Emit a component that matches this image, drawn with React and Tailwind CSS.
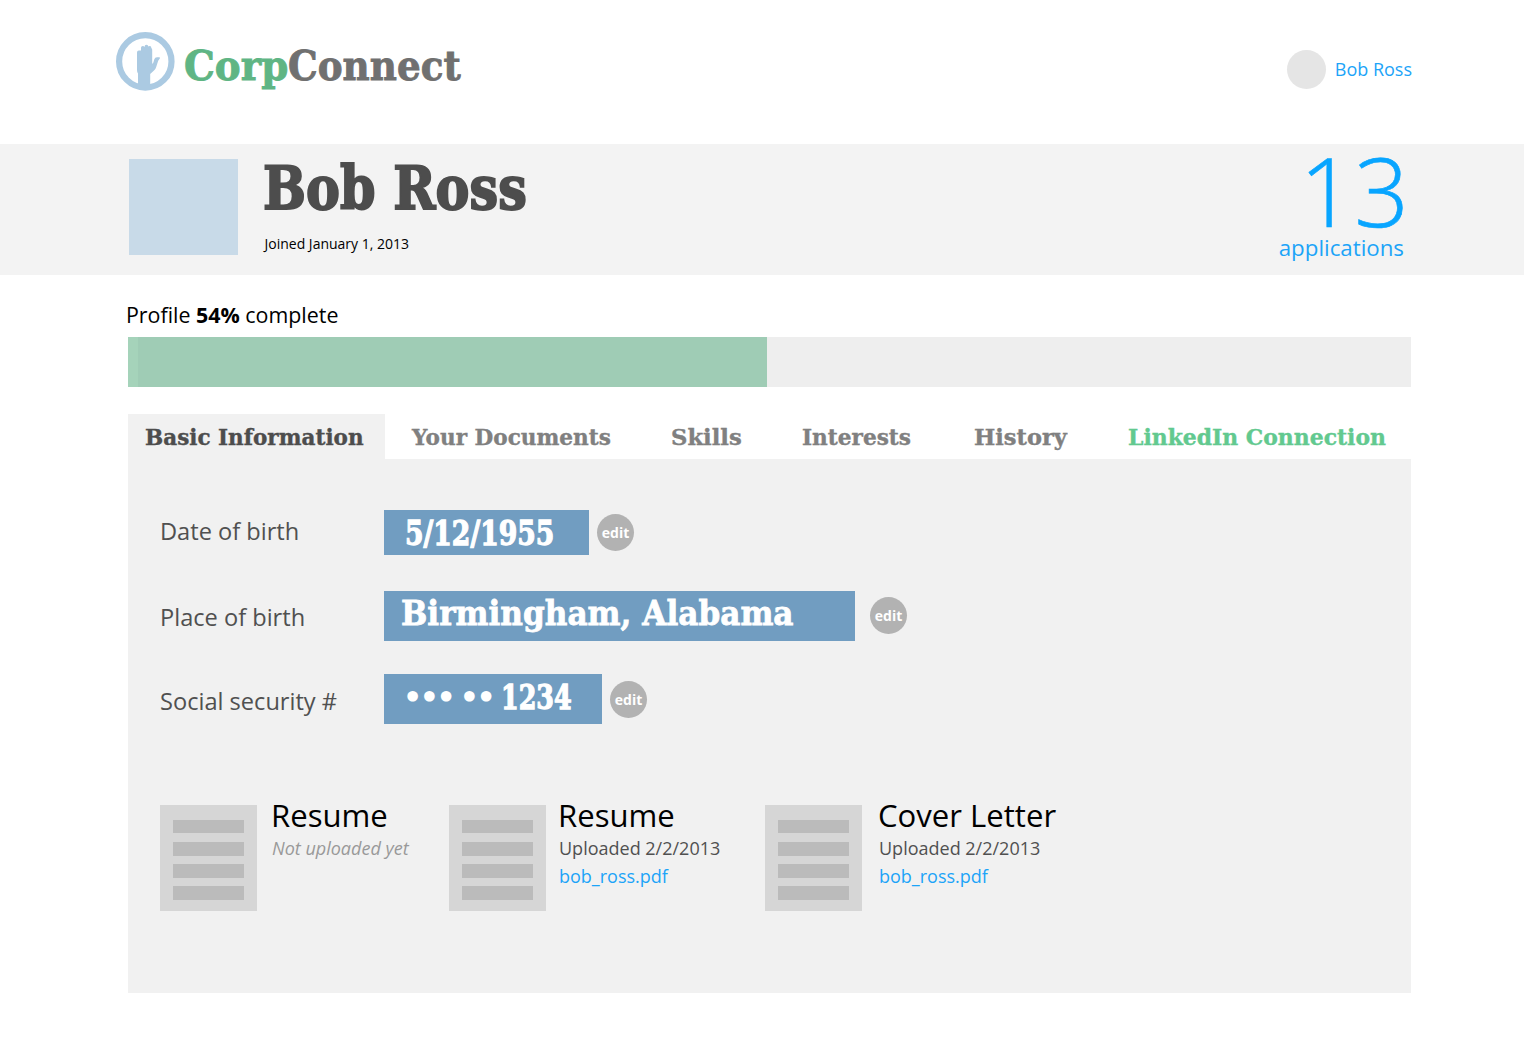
import { useLayoutEffect, useRef } from "react";

/* Headline text in a slab face, condensed to the width of its box. */
function Slab({ children, className = "" }) {
  const box = useRef(null);
  const text = useRef(null);
  useLayoutEffect(() => {
    const scale = box.current.clientWidth / text.current.offsetWidth;
    text.current.style.transform = `scaleX(${scale})`;
  }, []);
  return (
    <span
      ref={box}
      className={`block shrink-0 font-['DejaVu_Serif',serif] font-bold whitespace-nowrap ${className}`}
    >
      <span ref={text} className="inline-block origin-left align-top">
        {children}
      </span>
    </span>
  );
}

function Logo() {
  return (
    <svg viewBox="0 0 59 59" className="mt-8 h-[59px] w-[59px] shrink-0" fill="#abcae2">
      <circle cx="29.3" cy="29.4" r="26.2" fill="none" stroke="#abcae2" strokeWidth="6.2" />
      <path d="M22 54V41.5Q21 40 21 38V20.5Q21 18.6 22.8 18.6H25V15.8Q25 14 26.8 14Q28 14 28.5 15Q28.6 12.8 30.4 12.8Q32.2 12.8 32.4 14.6Q32.8 14 33.8 14Q35.4 14 35.4 16.2Q36.2 16.2 36.2 18V32L37.4 30.4L38.2 27.4Q38.9 25.2 41 25.2H43.2Q44.6 25.4 43.8 26.6L42.2 28.8L40.2 35Q39.6 37 38 38.6L34.2 42V54Z" />
    </svg>
  );
}

const tabs = [
  { label: "Your Documents", box: "ml-[27px] w-[199px]", color: "text-[#808080]" },
  { label: "Skills", box: "ml-[60px] w-[71px]", color: "text-[#808080]" },
  { label: "Interests", box: "ml-[60px] w-[109px]", color: "text-[#808080]" },
  { label: "History", box: "ml-[63px] w-[93px]", color: "text-[#808080]" },
  { label: "LinkedIn Connection", box: "ml-[61px] w-[258px]", color: "text-[#62c98f]" },
];

function Edit({ className }) {
  return (
    <button
      className={`flex h-[37px] w-[37px] shrink-0 items-center justify-center rounded-full bg-[#b2b2b2] text-sm font-bold text-white ${className}`}
    >
      edit
    </button>
  );
}

function Label({ children, className }) {
  return <div className={`w-[224px] shrink-0 text-[23.6px] leading-8 text-[#505050] ${className}`}>{children}</div>;
}

function Doc({ title, className, textClass, children }) {
  return (
    <div className={`flex ${className}`}>
      <div className="flex h-[106px] w-[97px] shrink-0 flex-col gap-[8.3px] bg-[#d6d6d6] pt-[14.7px] pl-[13.3px]">
        <div className="h-[13.8px] w-[71px] bg-[#bbbbbb]" />
        <div className="h-[13.8px] w-[71px] bg-[#bbbbbb]" />
        <div className="h-[13.8px] w-[71px] bg-[#bbbbbb]" />
        <div className="h-[13.8px] w-[71px] bg-[#bbbbbb]" />
      </div>
      <div className={`-mt-[9px] whitespace-nowrap text-lg leading-7 ${textClass}`}>
        <h3 className="-ml-px text-[31.1px] leading-[38px] text-black">{title}</h3>
        {children}
      </div>
    </div>
  );
}

export default function App() {
  return (
    <div className="h-[1037px] w-[1524px] overflow-hidden bg-white font-['Open_Sans','Noto_Sans',sans-serif] text-black">
      <header className="flex h-36 pr-[112px] pl-[116px]">
        <Logo />
        <Slab className="mt-[42px] ml-[9px] w-[104px] text-[41px] leading-[48px] text-[#5fb584] [-webkit-text-stroke:0.9px]">Corp</Slab>
        <Slab className="mt-[42px] w-[173px] text-[41px] leading-[48px] text-[#707070] [-webkit-text-stroke:0.9px]">Connect</Slab>
        <div className="mt-[49px] ml-auto flex h-10 items-center gap-[9px]">
          <div className="h-[39px] w-[39px] rounded-full bg-[#e5e5e5]" />
          <a className="text-lg text-[#1ca4f8]">Bob Ross</a>
        </div>
      </header>

      <section className="flex h-[131px] bg-[#f3f3f3] pr-[120px] pl-[129px]">
        <div className="mt-[15px] h-24 w-[109px] bg-[#c8dae8]" />
        <div className="ml-[25px]">
          <Slab className="mt-[10px] w-[264px] text-[59px] leading-[70px] text-[#4d4d4d] [-webkit-text-stroke:2px]">Bob Ross</Slab>
          <div className="mt-[10px] ml-[1.5px] text-sm leading-5">Joined January 1, 2013</div>
        </div>
        <div className="ml-auto text-right text-[#1ca4f8]">
          <div className="-mt-[4px] -mr-[5px] text-[96px] leading-[100px] font-light text-[#08a5ff] [-webkit-text-stroke:0.6px]">13</div>
          <div className="-mt-[8px] text-[22.3px] leading-[31px]">applications</div>
        </div>
      </section>

      <main className="pr-[113px] pl-32">
        <div className="-ml-[2px] pt-[24px] text-[21.4px] leading-8">
          Profile <b>54%</b> complete
        </div>
        <div className="mt-[6px] flex h-[49.5px] bg-[#eeeeee]">
          <div className="w-[10px] bg-[#a5d3ba]" />
          <div className="w-[629.4px] bg-[#9fccb5]" />
        </div>

        <nav className="mt-[27.5px] flex h-[44.5px]">
          <div className="w-[257px] bg-[#f1f1f1] pl-[17px]">
            <Slab className="mt-[7px] w-[219px] text-[23px] leading-8 text-[#4d4d4d] [-webkit-text-stroke:0.4px]">Basic Information</Slab>
          </div>
          {tabs.map((t) => (
            <Slab key={t.label} className={`mt-[7px] text-[23px] leading-8 [-webkit-text-stroke:0.4px] ${t.box} ${t.color}`}>
              {t.label}
            </Slab>
          ))}
        </nav>

        <section className="h-[534.5px] bg-[#f1f1f1] pl-8">
          <div className="flex pt-[51.5px]">
            <Label className="mt-[5px]">Date of birth</Label>
            <div className="h-[45px] w-[205px] bg-[#719dc1] pl-[21px]">
              <Slab className="mt-[3px] w-[149px] text-[34px] leading-10 text-white [-webkit-text-stroke:1.3px]">5/12/1955</Slab>
            </div>
            <Edit className="mt-1 ml-2" />
          </div>

          <div className="mt-[36px] flex">
            <Label className="mt-[10px]">Place of birth</Label>
            <div className="h-[50px] w-[471px] bg-[#719dc1] pl-[17px]">
              <Slab className="mt-[2px] w-[393px] text-[34px] leading-10 text-white [-webkit-text-stroke:0.8px]">Birmingham, Alabama</Slab>
            </div>
            <Edit className="mt-[6px] ml-[15px]" />
          </div>

          <div className="mt-[33px] flex">
            <Label className="mt-[11px]">Social security #</Label>
            <div className="flex h-[50px] w-[218px] bg-[#719dc1] pl-[19px]">
              <Slab className="mt-[3px] w-[50.4px] text-[30px] leading-10 tracking-[-2.4px] text-white">•••</Slab>
              <Slab className="mt-[3px] ml-[6.4px] w-[33.6px] text-[30px] leading-10 tracking-[-2.4px] text-white">••</Slab>
              <Slab className="mt-[3px] ml-[7.5px] w-[71px] text-[34px] leading-10 text-white [-webkit-text-stroke:1.3px]">1234</Slab>
            </div>
            <Edit className="mt-[7px] ml-2" />
          </div>

          <div className="mt-[81px] flex">
            <Doc title="Resume" className="w-[289px]" textClass="ml-[15px]">
              <div className="text-[#999999] italic">Not uploaded yet</div>
            </Doc>
            <Doc title="Resume" className="w-[316px]" textClass="ml-[13px]">
              <div className="text-[#505050]">Uploaded 2/2/2013</div>
              <a className="block text-[#1ca4f8]">bob_ross.pdf</a>
            </Doc>
            <Doc title="Cover Letter" textClass="ml-[17px]">
              <div className="text-[#505050]">Uploaded 2/2/2013</div>
              <a className="block text-[#1ca4f8]">bob_ross.pdf</a>
            </Doc>
          </div>
        </section>
      </main>
    </div>
  );
}
